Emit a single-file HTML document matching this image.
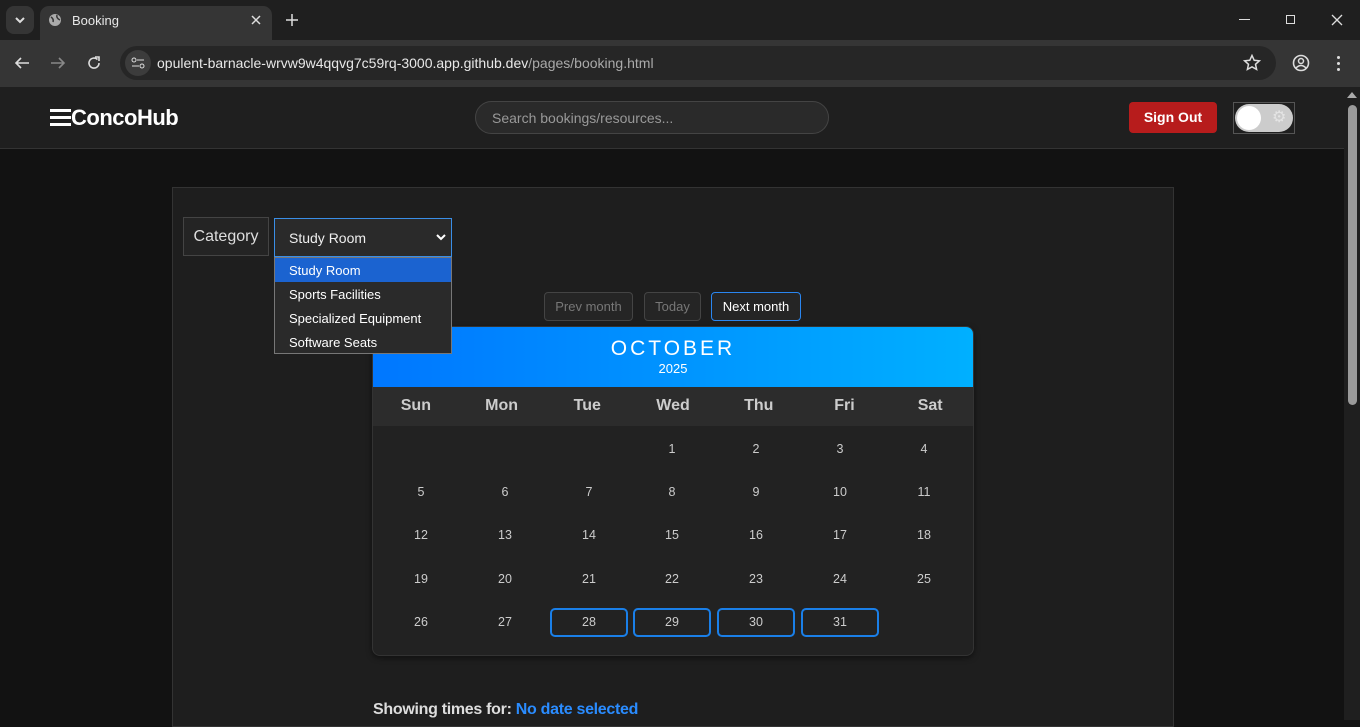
<!DOCTYPE html>
<html><head><meta charset="utf-8"><style>
*{box-sizing:border-box;margin:0;padding:0}
body{width:1360px;height:720px;overflow:hidden;background:#121212;font-family:"Liberation Sans",Arial,sans-serif;position:relative;color:#fff}
.abs{position:absolute}
</style></head><body>
<!-- tab strip -->
<div class="abs" style="left:0;top:0;width:1360px;height:40px;background:#1f1f1f"></div>
<div class="abs" style="left:6px;top:6px;width:28px;height:28px;border-radius:8px;background:#353535"></div>
<svg class="abs" style="left:13px;top:14px" width="14" height="12"><path d="M3 4l4 4 4-4" stroke="#ddd" stroke-width="2" fill="none"/></svg>
<div class="abs" style="left:40px;top:6px;width:232px;height:34px;background:#353535;border-radius:9px 9px 0 0"></div>
<svg class="abs" style="left:48px;top:13px" width="14" height="14"><circle cx="7" cy="7" r="6" fill="#aaa"/><path d="M3 4q3 2 2 5M9 2q-1 3 3 5" stroke="#353535" stroke-width="1.5" fill="none"/></svg>
<div class="abs" style="left:72px;top:13px;font-size:13px;color:#e8e8e8">Booking</div>
<svg class="abs" style="left:251px;top:15px" width="10" height="10"><path d="M1 1L9 9M9 1L1 9" stroke="#ddd" stroke-width="1.5"/></svg>
<svg class="abs" style="left:286px;top:14px" width="12" height="12"><path d="M6 0V12M0 6H12" stroke="#ddd" stroke-width="1.5"/></svg>
<div class="abs" style="left:1239px;top:19px;width:11px;height:1px;background:#ddd"></div>
<div class="abs" style="left:1286px;top:15px;width:9px;height:9px;border:1px solid #ddd"></div>
<svg class="abs" style="left:1331px;top:14px" width="12" height="12"><path d="M1 1L11 11M11 1L1 11" stroke="#ddd" stroke-width="1.3"/></svg>
<!-- toolbar -->
<div class="abs" style="left:0;top:40px;width:1360px;height:47px;background:#353535"></div>
<svg class="abs" style="left:14px;top:56px" width="16" height="14"><path d="M15 7H2M7 2L2 7l5 5" stroke="#ddd" stroke-width="1.6" fill="none"/></svg>
<svg class="abs" style="left:50px;top:56px" width="16" height="14"><path d="M1 7H14M9 2l5 5-5 5" stroke="#888" stroke-width="1.6" fill="none"/></svg>
<svg class="abs" style="left:86px;top:55px" width="16" height="16"><path d="M13 8A5 5 0 1 1 11.5 4.5" stroke="#ddd" stroke-width="1.6" fill="none"/><path d="M9 2H13V6" stroke="#ddd" stroke-width="1.6" fill="none"/></svg>
<div class="abs" style="left:120px;top:46px;width:1156px;height:34px;border-radius:17px;background:#262626"></div>
<div class="abs" style="left:125px;top:50px;width:26px;height:26px;border-radius:13px;background:#3c3c3c"></div>
<svg class="abs" style="left:130px;top:55px" width="16" height="16"><circle cx="4" cy="5" r="2" stroke="#ddd" fill="none"/><path d="M7 5h7M2 11h7" stroke="#ddd"/><circle cx="12" cy="11" r="2" stroke="#ddd" fill="none"/></svg>
<div class="abs" style="left:157px;top:55px;font-size:14px;color:#e8e8e8">opulent-barnacle-wrvw9w4qqvg7c59rq-3000.app.github.dev<span style="color:#aaa">/pages/booking.html</span></div>
<svg class="abs" style="left:1243px;top:54px" width="18" height="18"><path d="M9 1.5l2.2 4.8 5.2.5-3.9 3.5 1.1 5.1L9 12.8l-4.6 2.6 1.1-5.1L1.6 6.8l5.2-.5z" stroke="#ddd" stroke-width="1.5" fill="none"/></svg>
<svg class="abs" style="left:1292px;top:54px" width="18" height="18"><circle cx="9" cy="9" r="7.5" stroke="#ddd" stroke-width="1.6" fill="none"/><circle cx="9" cy="7" r="2.5" stroke="#ddd" stroke-width="1.5" fill="none"/><path d="M4 14q5-5 10 0" stroke="#ddd" stroke-width="1.5" fill="none"/></svg>
<div class="abs" style="left:1337px;top:56px;width:3px;height:3px;background:#ddd;box-shadow:0 6px #ddd,0 12px #ddd;border-radius:2px"></div>
<!-- page header -->
<div class="abs" style="left:0;top:87px;width:1344px;height:62px;background:#1f1f1f;border-bottom:1px solid #333"></div>
<div class="abs" style="left:50px;top:109px;width:21px;height:3px;background:#fff;box-shadow:0 7px #fff,0 14px #fff"></div>
<div class="abs" style="left:71px;top:105px;font-size:22px;font-weight:bold;letter-spacing:-0.5px">ConcoHub</div>
<div class="abs" style="left:475px;top:101px;width:354px;height:33px;border-radius:17px;background:#2a2a2a;border:1px solid #444;padding:8px 16px;font-size:14px;color:#999">Search bookings/resources...</div>
<div class="abs" style="left:1129px;top:102px;width:88px;height:31px;border-radius:4px;background:#b71c1c;font-size:14px;font-weight:bold;text-align:center;line-height:31px">Sign Out</div>
<div class="abs" style="left:1233px;top:102px;width:62px;height:32px;border:1px solid #555"></div>
<div class="abs" style="left:1235px;top:104px;width:58px;height:28px;border-radius:14px;background:#ccc"></div>
<div class="abs" style="left:1237px;top:106px;width:24px;height:24px;border-radius:12px;background:#fff"></div>
<div class="abs" style="left:1272px;top:107px;font-size:16px;color:#e4e4e4">⚙</div>
<!-- scrollbar -->
<div class="abs" style="left:1344px;top:87px;width:16px;height:633px;background:#1f1f1f"></div>
<div class="abs" style="left:1348px;top:105px;width:9px;height:300px;border-radius:5px;background:#9a9a9a"></div>
<svg class="abs" style="left:1347px;top:91px" width="10" height="8"><path d="M0 7L5 1L10 7Z" fill="#aaa"/></svg>
<!-- main panel -->
<div class="abs" style="left:172px;top:187px;width:1002px;height:540px;background:#1e1e1e;border:1px solid #333"></div>
<div class="abs" style="left:183px;top:217px;width:86px;height:39px;background:#242424;border:1px solid #444;font-size:16px;color:#ddd;line-height:37px;text-align:center">Category</div>
<div class="abs" style="left:274px;top:218px;width:178px;height:39px;background:#2a2a2a;border:1px solid #3a8ee6;font-size:14px;padding:11px 14px;color:#eee">Study Room</div>
<svg class="abs" style="left:436px;top:233px" width="10" height="8"><path d="M1 2l4 4 4-4" stroke="#fff" stroke-width="2" fill="none"/></svg>
<div class="abs" style="left:544px;top:292px;width:89px;height:29px;border:1px solid #444;border-radius:4px;background:#252525;color:#777;font-size:13px;text-align:center;line-height:27px">Prev month</div>
<div class="abs" style="left:644px;top:292px;width:57px;height:29px;border:1px solid #444;border-radius:4px;background:#252525;color:#777;font-size:13px;text-align:center;line-height:27px">Today</div>
<div class="abs" style="left:711px;top:292px;width:90px;height:29px;border:1px solid #2a86f0;border-radius:4px;background:#252525;color:#fff;font-size:13px;text-align:center;line-height:27px">Next month</div>
<!-- calendar -->
<div class="abs" style="left:372px;top:326px;width:602px;height:330px;border-radius:8px;background:#222;border:1px solid #333;overflow:hidden;box-shadow:0 2px 6px rgba(0,0,0,.5)">
<div style="height:60px;background:linear-gradient(90deg,#0077ff,#00b0ff);text-align:center">
<div style="font-size:21px;letter-spacing:3px;padding-top:10px">OCTOBER</div>
<div style="font-size:13px;margin-top:0">2025</div></div>
<div style="height:39px;background:#2c2c2c;display:flex;font-size:16px;font-weight:bold;color:#ccc;line-height:37px">
<div style="width:86px;text-align:center">Sun</div><div style="width:86px;text-align:center">Mon</div><div style="width:86px;text-align:center">Tue</div><div style="width:86px;text-align:center">Wed</div><div style="width:86px;text-align:center">Thu</div><div style="width:86px;text-align:center">Fri</div><div style="width:86px;text-align:center">Sat</div></div>
</div>
<div id="g" class="abs" style="left:0;top:0"></div>
<script>
var cx=[421,505,589,672,756,840,924],cy=[450,493,536,580,623],h='';
for(var d=1;d<=31;d++){var i=d+2,c=i%7,r=Math.floor(i/7);
var box=d>=28?'border:2px solid #1a7fe8;border-radius:5px;':'';
h+='<div class="abs" style="left:'+(cx[c]-39)+'px;top:'+(cy[r]-15)+'px;width:78px;height:29px;'+box+'font-size:12.5px;color:#ccc;text-align:center;line-height:'+(d>=28?25:29)+'px">'+d+'</div>';}
document.getElementById('g').innerHTML=h;
</script>
<div class="abs" style="left:274px;top:257px;width:178px;height:97px;background:#2a2a2a;border:1px solid #777;font-size:13px;color:#fff;z-index:5">
<div style="height:24px;background:#1b63d0;padding:5px 14px">Study Room</div>
<div style="height:24px;padding:5px 14px">Sports Facilities</div>
<div style="height:24px;padding:5px 14px">Specialized Equipment</div>
<div style="height:24px;padding:5px 14px">Software Seats</div></div>
<div class="abs" style="left:373px;top:701px;font-size:16px;font-weight:bold;color:#ddd;letter-spacing:-0.3px">Showing times for: <span style="color:#2a8cff">No date selected</span></div>
</body></html>
